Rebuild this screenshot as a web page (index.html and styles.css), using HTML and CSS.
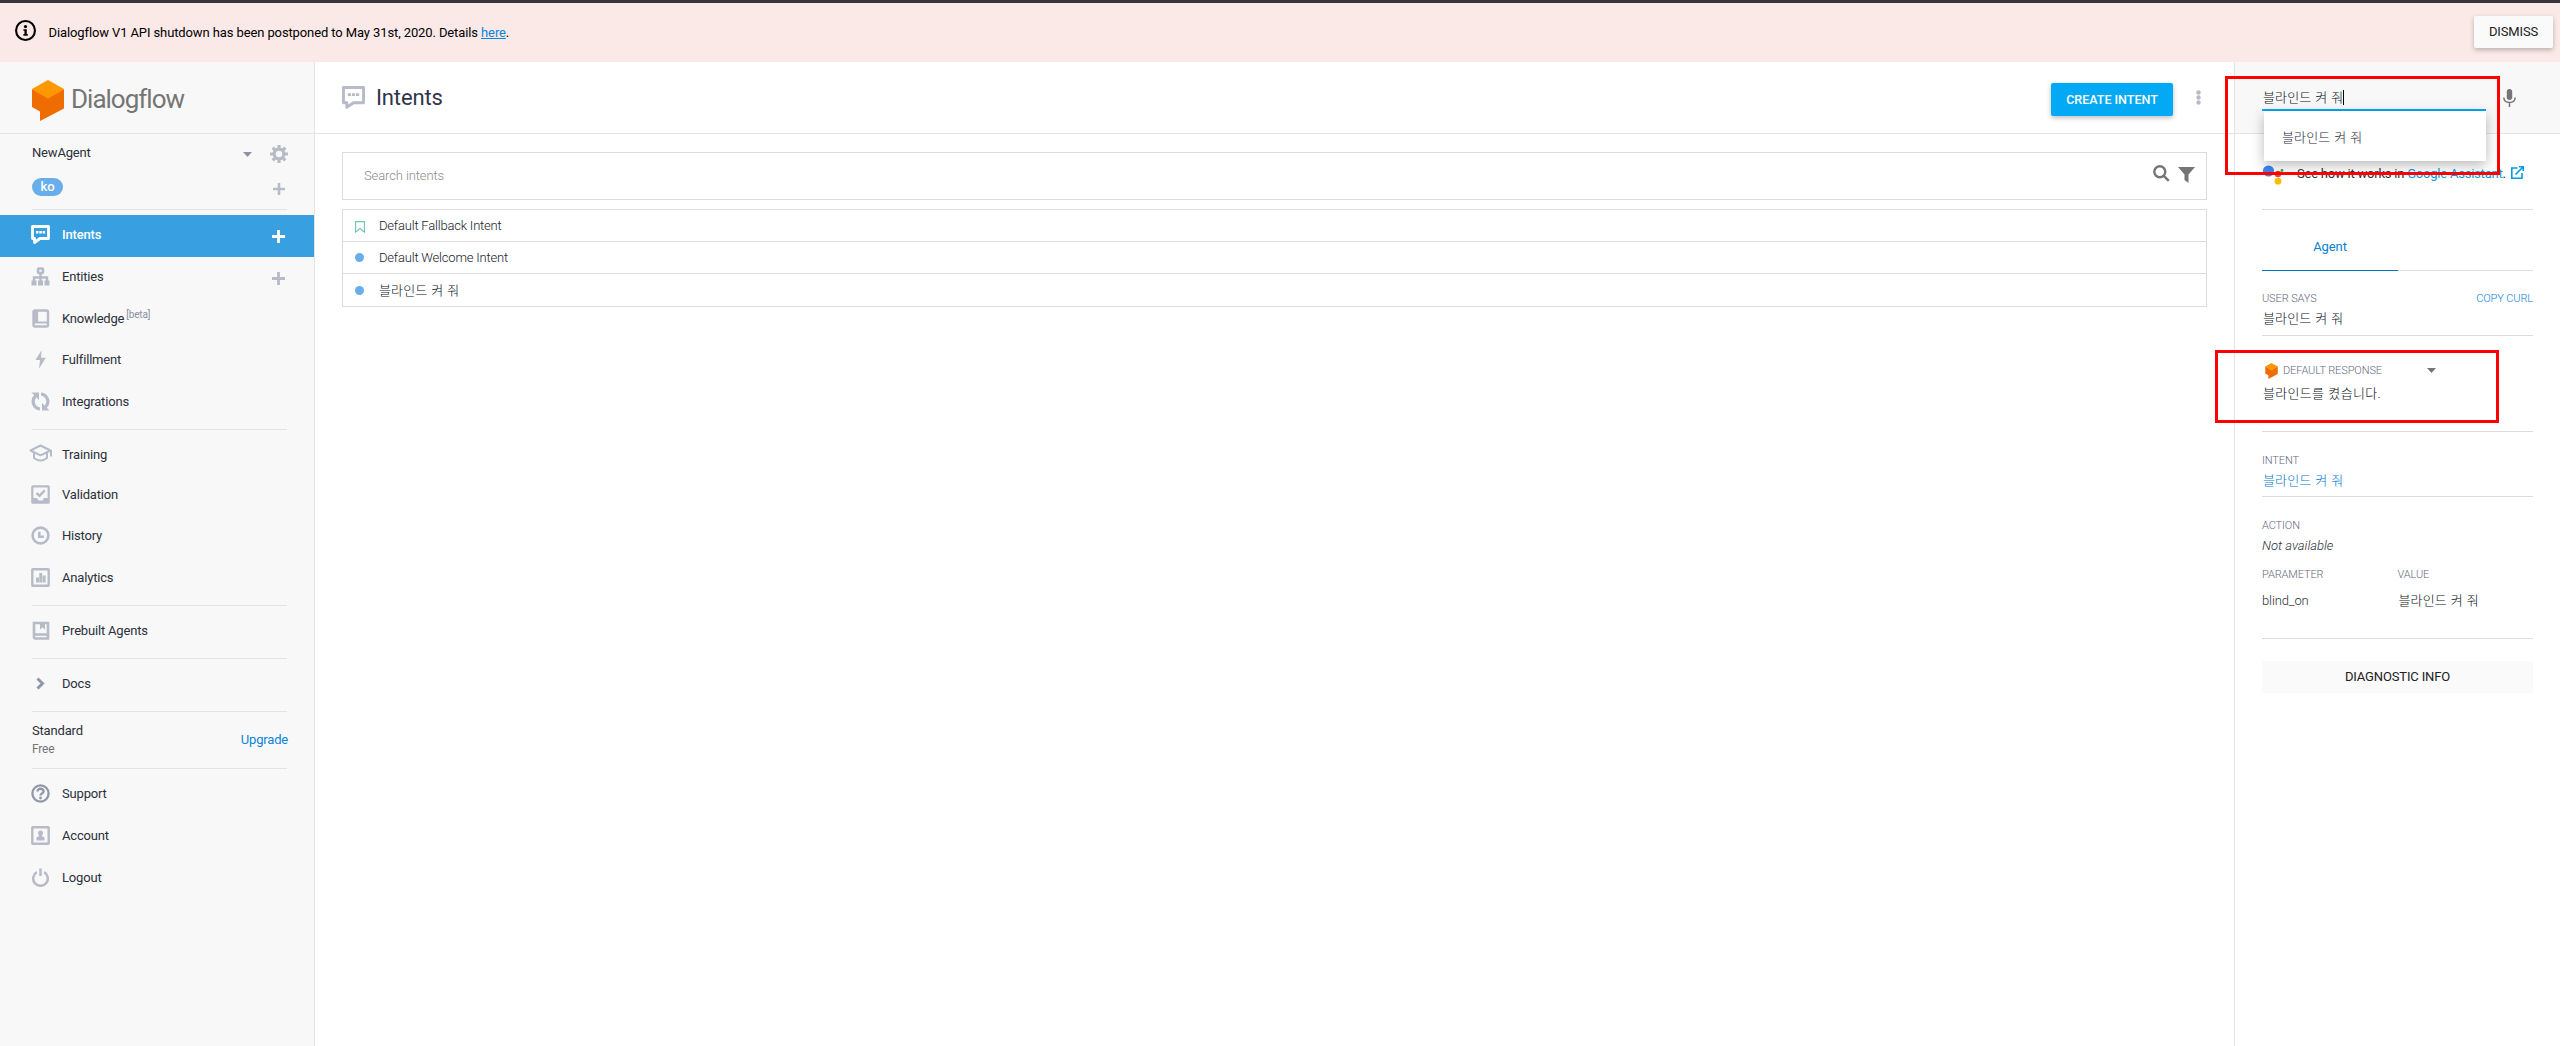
FILE: index.html
```html
<!DOCTYPE html>
<html lang="ko">

<head>
  <title>Dialogflow</title>
  <meta charset="UTF-8">
  <meta name="viewport" content="width=device-width, initial-scale=1">
  <link rel="stylesheet" href="styles.css">
</head>

<body>
  <div class="banner">
    <svg class="info" viewBox="0 0 20 20"><circle cx="10" cy="10" r="9" fill="none" stroke="#000" stroke-width="2"/><circle cx="10" cy="6.3" r="1.5"/><path d="M8 8.700h3.200v4.600h1V15H8v-1.700h1v-3H8z"/></svg>
    <p>Dialogflow V1 API shutdown has been postponed to May 31st, 2020. Details <a href="#">here</a>.</p>
    <button class="dismiss">DISMISS</button>
  </div>

  <div class="page">
    <aside class="sidebar">
      <div class="logo">
        <svg class="cube" viewBox="0 0 32 41"><path fill="#ff9800" d="M16 0l16 9-16 10L0 9z"/><path fill="#ef6c00" d="M0 9l16 9.500L32 9v19.500L8 41V31.500L0 27z"/></svg>
        <span>Dialogflow</span>
      </div>

      <div class="agent">
        <span class="agent-name">NewAgent</span>
        <svg class="caret" viewBox="0 0 9 5"><path d="M0 0h9L4.500 5z"/></svg>
        <svg class="gear" viewBox="0 0 18 18"><circle cx="9" cy="9" r="4.800" fill="none" stroke="currentColor" stroke-width="3.200"/><path stroke="currentColor" stroke-width="3.200" d="M9 0v4M9 14v4M0 9h4M14 9h4M2.700 2.700l2.700 2.700M12.600 12.600l2.700 2.700M2.700 15.300l2.700-2.700M12.600 5.400l2.700-2.700"/></svg>
      </div>
      <div class="lang">
        <span class="pill">ko</span>
        <svg class="plus" viewBox="0 0 13 13"><path d="M6.500 0v13M0 6.500h13"/></svg>
      </div>
      <hr>

      <a class="item active">
        <svg viewBox="0 0 19 19"><path fill="none" stroke="currentColor" stroke-width="2.800" stroke-linejoin="round" d="M1.500 1.500h16v12H9l-5.500 4v-4h-2z"/><path fill="currentColor" d="M5 6h2.500v2.400H5zM8.300 6h2.500v2.400H8.300zM11.600 6h2.500v2.400h-2.500z"/></svg>
        Intents
        <svg class="plus" viewBox="0 0 13 13"><path d="M6.500 0v13M0 6.500h13"/></svg>
      </a>
      <a class="item">
        <svg viewBox="0 0 19 19"><rect x="7" y="1.500" width="5" height="4.500" fill="none" stroke="currentColor" stroke-width="2.600" rx="1"/><path fill="none" stroke="currentColor" stroke-width="2.400" d="M9.500 6v9M3 15v-4.500h13V15"/><path fill="currentColor" d="M.5 13.500h5v5h-5zM7 13.500h5v5H7zM13.500 13.500h5v5h-5z"/></svg>
        Entities
        <svg class="plus" viewBox="0 0 13 13"><path d="M6.500 0v13M0 6.500h13"/></svg>
      </a>
      <a class="item short">
        <svg viewBox="0 0 19 19"><rect x="2.500" y="1.500" width="14.500" height="16" rx="1.500" fill="none" stroke="currentColor" stroke-width="2.400"/><path fill="none" stroke="currentColor" stroke-width="2.200" d="M6 1.500V13M2.500 13.500H17"/><path stroke="currentColor" stroke-width="3" d="M4 2v12"/></svg>
        Knowledge<span class="beta">[beta]</span>
      </a>
      <a class="item">
        <svg viewBox="0 0 19 19"><path fill="currentColor" d="M10.500.3L4.500 10h4.500L8 18.700 14.800 7.800H10z"/></svg>
        Fulfillment
      </a>
      <a class="item">
        <svg viewBox="0 0 19 19"><path fill="none" stroke="currentColor" stroke-width="3.200" d="M9 17a7.600 7.600 0 0 1-4.500-13M10 2a7.600 7.600 0 0 1 4.500 13"/><path fill="currentColor" d="M.5.600H8V8zM18.500 18.400H11V11z"/></svg>
        Integrations
      </a>
      <hr>
      <a class="item training">
        <svg class="wide" viewBox="0 0 23 19"><path fill="none" stroke="currentColor" stroke-width="2" stroke-linejoin="round" d="M1.500 6.500l10-5 10 5-10 4.800zM5 8.500V14q6.500 5 13 0V8.500M22 6v6.500"/></svg>
        Training
      </a>
      <a class="item short">
        <svg viewBox="0 0 19 19"><rect x="1.300" y="1.300" width="16.400" height="16.400" fill="none" stroke="currentColor" stroke-width="2.200" rx=".5"/><path fill="currentColor" d="M1 13h5l1.500 2.500h4L13 13h5v5H1z"/><path fill="none" stroke="currentColor" stroke-width="2.400" d="M5.500 8l3 2.800 5.300-5.500"/></svg>
        Validation
      </a>
      <a class="item">
        <svg viewBox="0 0 19 19"><circle cx="9.500" cy="9.500" r="7.900" fill="none" stroke="currentColor" stroke-width="2.600"/><path fill="none" stroke="currentColor" stroke-width="2.500" d="M8.300 5.800v4.900h4.500"/></svg>
        History
      </a>
      <a class="item">
        <svg viewBox="0 0 19 19"><rect x="1.300" y="1.300" width="16.400" height="16.400" fill="none" stroke="currentColor" stroke-width="2.400" rx=".5"/><path fill="currentColor" d="M5 9.500h3v5H5zM8.300 5h2.900v9.500H8.300zM11.700 7.500h2.900v7h-2.900z"/></svg>
        Analytics
      </a>
      <hr>
      <a class="item">
        <svg viewBox="0 0 19 19"><path fill="none" stroke="currentColor" stroke-width="2.600" d="M3 2h14v15.500H4L3 16.500zM3 13.500h14"/><path fill="currentColor" d="M9 2h5v6.500l-2.500-2-2.500 2z"/></svg>
        Prebuilt Agents
      </a>
      <hr>
      <a class="item dark">
        <svg viewBox="0 0 19 19"><path fill="none" stroke="currentColor" stroke-width="3" d="M6.500 4.500l5 5-5 5"/></svg>
        Docs
      </a>
      <hr class="flush">
      <div class="plan">
        <div>
          <p>Standard</p>
          <p class="free">Free</p>
        </div>
        <a href="#">Upgrade</a>
      </div>
      <hr class="plan-end">
      <a class="item dark">
        <svg viewBox="0 0 19 19"><circle cx="9.500" cy="9.500" r="8.100" fill="none" stroke="currentColor" stroke-width="2.300"/><path fill="none" stroke="currentColor" stroke-width="2.400" d="M6.500 7.500c0-3.800 6.200-3.500 6 0-.1 2-3 2-3 4"/><circle cx="9.500" cy="14" r="1.400" fill="currentColor"/></svg>
        Support
      </a>
      <a class="item">
        <svg viewBox="0 0 19 19"><rect x="1.300" y="1.300" width="16.400" height="16.400" fill="none" stroke="currentColor" stroke-width="2.400" rx=".5"/><circle cx="9.500" cy="7" r="2.500" fill="currentColor"/><path fill="currentColor" d="M8 8h3v2l2.500 1.500v3h-8v-3L8 10z"/></svg>
        Account
      </a>
      <a class="item">
        <svg viewBox="0 0 19 19"><path fill="none" stroke="currentColor" stroke-width="2.500" d="M5.800 4.200a7.300 7.300 0 1 0 7.400 0M9.500.5v7.500"/></svg>
        Logout
      </a>
    </aside>

    <main class="main">
      <header class="main-head">
        <svg class="title-icon" viewBox="0 0 19 19"><path fill="none" stroke="currentColor" stroke-width="2.400" stroke-linejoin="round" d="M1.200 1.200h16.600v12.600H9.500l-5.500 3.800v-3.800H1.200z"/><path fill="currentColor" d="M4.800 6h2.600v2.300H4.800zM8.200 6h2.600v2.300H8.200zM11.600 6h2.600v2.300h-2.600z"/></svg>
        <h1>Intents</h1>
        <button class="create">CREATE INTENT</button>
        <svg class="more" viewBox="0 0 5 15"><circle cx="2.500" cy="2.500" r="2.200"/><circle cx="2.500" cy="7.500" r="2.200"/><circle cx="2.500" cy="12.500" r="2.200"/></svg>
      </header>

      <div class="search">
        <span>Search intents</span>
        <svg class="lens" viewBox="0 0 17 17"><circle cx="6.800" cy="6.800" r="5.500"/><path d="M10.800 10.800l5 5"/></svg>
        <svg class="filter" viewBox="0 0 17 16"><path d="M0 0h17l-6.500 7.500V16L6.500 13V7.500z"/></svg>
      </div>

      <ul class="intents">
        <li><svg class="bookmark" viewBox="0 0 10 12"><path d="M.6.6h8.800v10.500L5 7.500.6 11.100z"/></svg>Default Fallback Intent</li>
        <li><i class="dot"></i>Default Welcome Intent</li>
        <li><i class="dot"></i><span class="ko">블라인드 켜 줘</span></li>
      </ul>
    </main>

    <aside class="tester">
      <div class="try">
        <div class="try-input"><span class="ko">블라인드 켜 줘</span><i class="cursor"></i></div>
        <svg class="mic" viewBox="0 0 13 18"><rect x="3.800" y="0" width="5.400" height="11" rx="2.700" fill="currentColor"/><path fill="none" stroke="currentColor" stroke-width="1.500" d="M.8 8.500q.3 5 5.700 5t5.700-5M6.500 13.500V18"/></svg>
        <div class="suggest ko">블라인드 켜 줘</div>
      </div>

      <div class="tester-body">
        <div class="assistant">
          <svg class="ga" viewBox="0 0 22 22"><circle cx="6.500" cy="7" r="5.600" fill="#4285f4"/><circle cx="16" cy="10" r="3.200" fill="#ea4335"/><circle cx="16" cy="17.200" r="3.400" fill="#fbbc05"/><circle cx="20" cy="6.500" r="1.400" fill="#34a853"/></svg>
          <p>See how it works in <a href="#">Google Assistant</a>.</p>
          <svg class="external" viewBox="0 0 13 13"><path d="M6.500 2H.8v10.200H11V7M4.500 8.500L12 1M8 .8h4.300V5"/></svg>
        </div>

        <div class="tabs"><span class="tab">Agent</span></div>

        <section class="says">
          <div class="label">USER SAYS <a href="#">COPY CURL</a></div>
          <p class="ko">블라인드 켜 줘</p>
        </section>

        <section class="response">
          <div class="label">
            <svg class="mini" viewBox="0 0 32 41"><path fill="#ff9800" d="M16 0l16 9-16 10L0 9z"/><path fill="#ef6c00" d="M0 9l16 9.500L32 9v19.500L8 41V31.500L0 27z"/></svg>
            DEFAULT RESPONSE
            <svg class="caret" viewBox="0 0 9 5"><path d="M0 0h9L4.500 5z"/></svg>
          </div>
          <p class="ko">블라인드를 켰습니다.</p>
        </section>

        <section class="intent">
          <div class="label">INTENT</div>
          <p class="ko"><a href="#">블라인드 켜 줘</a></p>
        </section>

        <section class="action">
          <div class="label">ACTION</div>
          <p class="na">Not available</p>
          <div class="params label"><span>PARAMETER</span><span>VALUE</span></div>
          <div class="params values"><span>blind_on</span><span class="ko">블라인드 켜 줘</span></div>
        </section>

        <button class="diagnostic">DIAGNOSTIC INFO</button>
      </div>
    </aside>
  </div>

  <!-- red highlight boxes -->
  <div class="mark mark-input"></div>
  <div class="mark mark-response"></div>
</body>

</html>
```

FILE: styles.css
```css
* {
  box-sizing: border-box;
}

body {
  margin: 0;
  width: 2560px;
  height: 1046px;
  overflow: hidden;
  background: #fff;
  border-top: 3px solid #35353a;
  font-family: Roboto, "Noto Sans CJK KR", sans-serif;
  font-size: 13px;
  letter-spacing: -0.11px;
  color: #2b303b;
  display: flex;
  flex-direction: column;
}

html {
  background: #fff;
}

p, h1, ul {
  margin: 0;
  padding: 0;
}

a {
  color: #0b84dc;
  text-decoration: none;
}

svg {
  flex: none;
}

button {
  border: none;
  padding: 0;
  font: 13px Roboto, sans-serif;
}

.ko {
  padding-left: 1px;
  letter-spacing: 0.12px;
  word-spacing: 0.6px;
  font-weight: 300;
  color: #0c1020;
}

/* top banner */
.banner {
  height: 59px;
  padding: 0 7px 0 15px;
  background: #fbe9e7;
  color: #000;
  display: flex;
  align-items: center;
}

.banner p {
  margin-left: 12.5px;
}

.banner a {
  text-decoration: underline;
}

.info {
  width: 21px;
  height: 21px;
  margin-bottom: 4px;
}

.dismiss {
  width: 79px;
  height: 32px;
  margin-left: auto;
  margin-bottom: 1px;
  padding-bottom: 1px;
  background: #fafafa;
  color: #212121;
  letter-spacing: -0.15px;
  border-radius: 2px;
  box-shadow: 0 2px 5px rgba(0, 0, 0, 0.26);
}

.page {
  flex: 1;
  display: flex;
}

/* sidebar */
.sidebar {
  width: 315px;
  background: #f8f8f8;
  border-right: 1px solid #e3e3e3;
  letter-spacing: -0.18px;
}

.logo {
  height: 72px;
  padding: 5px 0 0 32px;
  border-bottom: 1px solid #e3e3e3;
  display: flex;
  align-items: center;
  color: #757575;
}

.logo span {
  margin: -3px 0 0 7px;
  font-size: 26px;
  letter-spacing: -1px;
}

.cube {
  width: 32px;
  height: 41px;
}

.agent {
  height: 38px;
  padding: 0 26px 0 32px;
  display: flex;
  align-items: center;
}

.agent-name {
  margin-top: -2px;
}

.caret {
  width: 9px;
  height: 5px;
  fill: #8d93a5;
}

.agent .caret {
  margin: 2px 18px 0 auto;
}

.gear {
  width: 18px;
  height: 18px;
  margin-top: 2px;
  color: #b7bbc7;
}

.lang {
  height: 37px;
  padding: 6px 29px 0 32px;
  display: flex;
  align-items: flex-start;
}

.pill {
  width: 31px;
  height: 18px;
  border-radius: 9px;
  background: #68aeea;
  color: #fff;
  font-weight: 500;
  line-height: 18px;
  text-align: center;
}

.plus {
  width: 13px;
  height: 13px;
  margin-left: auto;
  fill: none;
  stroke: #b7bbc7;
  stroke-width: 2.8;
}

.lang .plus {
  margin-top: 5px;
  width: 12px;
  height: 12px;
}

hr {
  height: 1px;
  margin: 5px 27px 5px 32px;
  border: none;
  background: #e3e3e3;
}

.lang + hr {
  margin-top: 0;
}

hr.flush {
  margin-bottom: 0;
}

hr.plan-end {
  margin-top: 0;
}

.item {
  height: 42px;
  padding: 0 29px 4px 31px;
  display: flex;
  align-items: center;
  color: #2b303b;
}

.item.short {
  height: 41px;
  padding-bottom: 3px;
}

.item.training {
  height: 40px;
  padding-bottom: 2px;
}

.item svg:first-child {
  width: 19px;
  height: 19px;
  margin-top: 1px;
  margin-right: 12px;
  color: #b7bbc7;
}

.item svg.wide:first-child {
  width: 23px;
  margin: 0 10px 2px -2px;
}

.item.dark svg:first-child {
  color: #9298a9;
}

.item .plus {
  margin-top: 4px;
}

.item.active {
  background: #389fe0;
  color: #fff;
  font-weight: 500;
}

.item.active svg:first-child {
  color: #fff;
}

.item.active .plus {
  stroke: #fff;
}

.beta {
  margin: -8px 0 0 2px;
  font-size: 10px;
  color: #8a90a2;
}

.plan {
  height: 56px;
  padding: 0 26px 0 32px;
  display: flex;
  align-items: center;
  justify-content: space-between;
  line-height: 18px;
}

.free {
  color: #757575;
  font-size: 12px;
}

/* intents list */
.main {
  flex: 1;
}

.main-head {
  height: 72px;
  padding: 0 33px 0 27px;
  border-bottom: 1px solid #e3e3e3;
  display: flex;
  align-items: center;
}

.title-icon {
  width: 23px;
  height: 23px;
  color: #b7bbc7;
}

h1 {
  margin: -1px 0 0 11px;
  font-size: 22px;
  font-weight: 400;
  letter-spacing: -0.15px;
  color: #303648;
}

.create {
  width: 122px;
  height: 33px;
  margin: 4px 23px 0 auto;
  background: #03a9f4;
  border-radius: 2px;
  color: #fff;
  font-weight: 500;
  font-size: 12.5px;
  box-shadow: 0 2px 5px rgba(0, 0, 0, 0.26);
}

.more {
  width: 5px;
  height: 15px;
  fill: #b7bbc7;
}

.search {
  height: 48px;
  margin: 18px 27px 9px;
  padding: 0 11px 0 21px;
  border: 1px solid #dcdcdc;
  display: flex;
  align-items: center;
  font-weight: 300;
  color: #8c8c8c;
}

.search span {
  margin-top: -1px;
}

.lens {
  width: 17px;
  height: 17px;
  margin: -6px 8px 0 auto;
  fill: none;
  stroke: #757575;
  stroke-width: 2.4;
}

.filter {
  width: 17px;
  height: 16px;
  margin-top: -3px;
  fill: #757575;
}

.intents {
  margin: 0 27px;
  list-style: none;
  border: 1px solid #dcdcdc;
  font-weight: 300;
  letter-spacing: -0.2px;
  color: #151a28;
}

.intents li {
  height: 32px;
  padding: 0 0 1px 11px;
  display: flex;
  align-items: center;
}

.intents li:first-child {
  height: 31px;
}

.intents li + li {
  border-top: 1px solid #dcdcdc;
}

.intents li:last-child {
  height: 33px;
}

.intents .ko {
  padding-left: 0;
}

.bookmark {
  width: 10px;
  height: 12px;
  margin: 3px 14px 0 1px;
  fill: none;
  stroke: #6dc6ae;
  stroke-width: 1.1;
}

.dot {
  width: 9px;
  height: 9px;
  margin: 1px 15px 0 1px;
  border-radius: 50%;
  background: #68aeea;
}

/* try it now panel */
.tester {
  width: 326px;
  border-left: 1px solid #e3e3e3;
}

.try {
  position: relative;
  height: 72px;
  padding: 24px 43px 0 27px;
  background: #f8f8f8;
  border-bottom: 1px solid #e3e3e3;
  display: flex;
  align-items: flex-start;
  justify-content: space-between;
}

.try-input {
  width: 224px;
  height: 25px;
  border-bottom: 2px solid #03a9f4;
  display: flex;
  align-items: center;
  line-height: 22px;
}

.cursor {
  width: 1px;
  height: 15px;
  background: #000;
}

.mic {
  width: 13px;
  height: 18px;
  margin: 3px 1px 0 0;
  color: #757575;
}

.suggest {
  position: absolute;
  left: 29px;
  top: 49px;
  width: 222px;
  height: 50px;
  padding-left: 18px;
  background: #fff;
  line-height: 54px;
  color: #252b3c;
  box-shadow: 0 4px 12px rgba(0, 0, 0, 0.28);
}

.tester-body {
  padding: 0 27px;
}

.assistant {
  height: 76px;
  padding-top: 4px;
  border-bottom: 1px solid #dcdcdc;
  display: flex;
  align-items: center;
}

.assistant p {
  letter-spacing: -0.22px;
}

.ga {
  width: 22px;
  height: 22px;
  margin: 3px 13px 0 0;
}

.assistant a {
  color: #039be5;
}

.external {
  width: 13px;
  height: 13px;
  margin: -2px 0 0 5px;
  fill: none;
  stroke: #039be5;
  stroke-width: 1.6;
}

.tabs {
  height: 61px;
  border-bottom: 1px solid #dcdcdc;
}

.tab {
  display: block;
  width: 136px;
  height: 61px;
  padding-top: 13px;
  border-bottom: 1px solid #0277bd;
  line-height: 47px;
  text-align: center;
  color: #0b7fd0;
}

section {
  border-bottom: 1px solid #dcdcdc;
  font-weight: 300;
}

section p {
  line-height: 26px;
}

.label {
  height: 16px;
  display: flex;
  align-items: center;
  justify-content: space-between;
  font-size: 11px;
  font-weight: 300;
  color: #656b7c;
}

.says {
  height: 65px;
  padding-top: 19px;
}

.response {
  height: 96px;
  padding-top: 24px;
}

.response .label {
  height: 20px;
  margin-bottom: 1px;
  justify-content: flex-start;
}

.response .ko {
  letter-spacing: 0.3px;
}

.response .caret {
  margin-left: 45px;
  fill: #757575;
}

.mini {
  width: 13px;
  height: 16px;
  margin: 1px 5px 0 3px;
}

.intent {
  height: 65px;
  padding-top: 20px;
}

.intent a {
  color: #0277d0;
}

.action {
  height: 142px;
  padding-top: 20px;
}

.na {
  font-style: italic;
  letter-spacing: 0;
}

.params {
  display: flex;
}

.params span {
  width: 136px;
}

.params.label {
  margin-top: 7px;
  justify-content: flex-start;
}

.values {
  margin-top: 6px;
  line-height: 26px;
}

.diagnostic {
  width: 100%;
  height: 32px;
  margin-top: 22px;
  padding-bottom: 1px;
  background: #fafafa;
  color: #212121;
  letter-spacing: -0.15px;
}

.mark {
  position: absolute;
  border: 3px solid #f00;
}

.mark-input {
  left: 2225px;
  top: 76px;
  width: 275px;
  height: 99px;
}

.mark-response {
  left: 2215px;
  top: 350px;
  width: 284px;
  height: 73px;
}
```
